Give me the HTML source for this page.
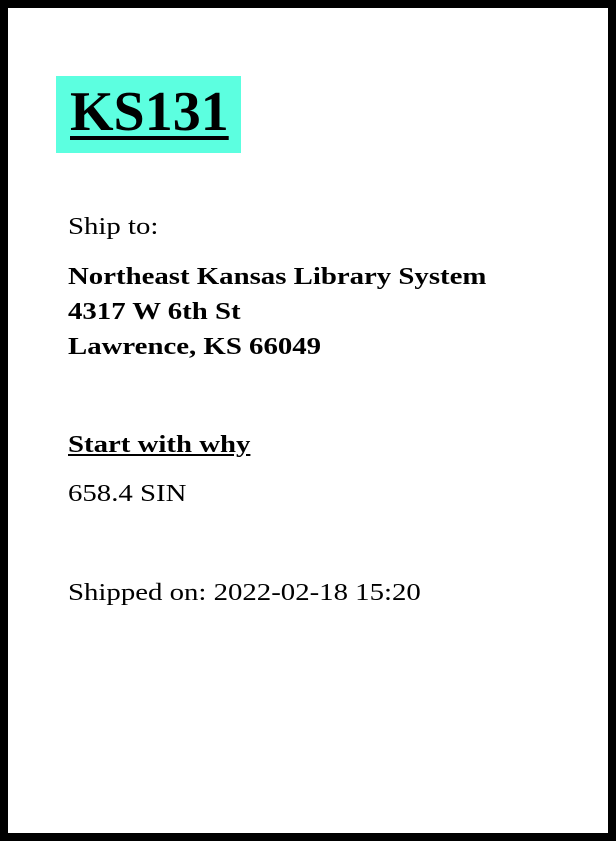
<!DOCTYPE html>
<html><head><style>
html,body{margin:0;padding:0;}
body{width:616px;height:841px;position:relative;background:#fff;font-family:"Liberation Serif",serif;color:#000;overflow:hidden;}
.frame{position:absolute;left:0;top:0;width:600px;height:825px;border:8px solid #000;}
.t{position:absolute;left:68px;white-space:nowrap;font-size:24px;line-height:35px;transform:scaleX(1.2);transform-origin:0 0;}
.box{position:absolute;left:56px;top:76px;width:185px;height:77px;background:#5cffe0;}
.ks{position:absolute;left:70px;top:80px;font-size:56px;font-weight:bold;line-height:64px;text-decoration:underline;text-decoration-thickness:4px;text-underline-offset:6px;}
</style></head><body>
<div class="frame"></div>
<div class="box"></div>
<div class="ks">KS131</div>
<div class="t" style="top:210px">Ship to:</div>
<div class="t" style="top:260px;font-weight:bold">Northeast Kansas Library System<br>4317 W 6th St<br>Lawrence, KS 66049</div>
<div class="t" style="top:428px;font-weight:bold;text-decoration:underline">Start with why</div>
<div class="t" style="top:477px">658.4 SIN</div>
<div class="t" style="top:576px">Shipped on: 2022-02-18 15:20</div>
</body></html>
